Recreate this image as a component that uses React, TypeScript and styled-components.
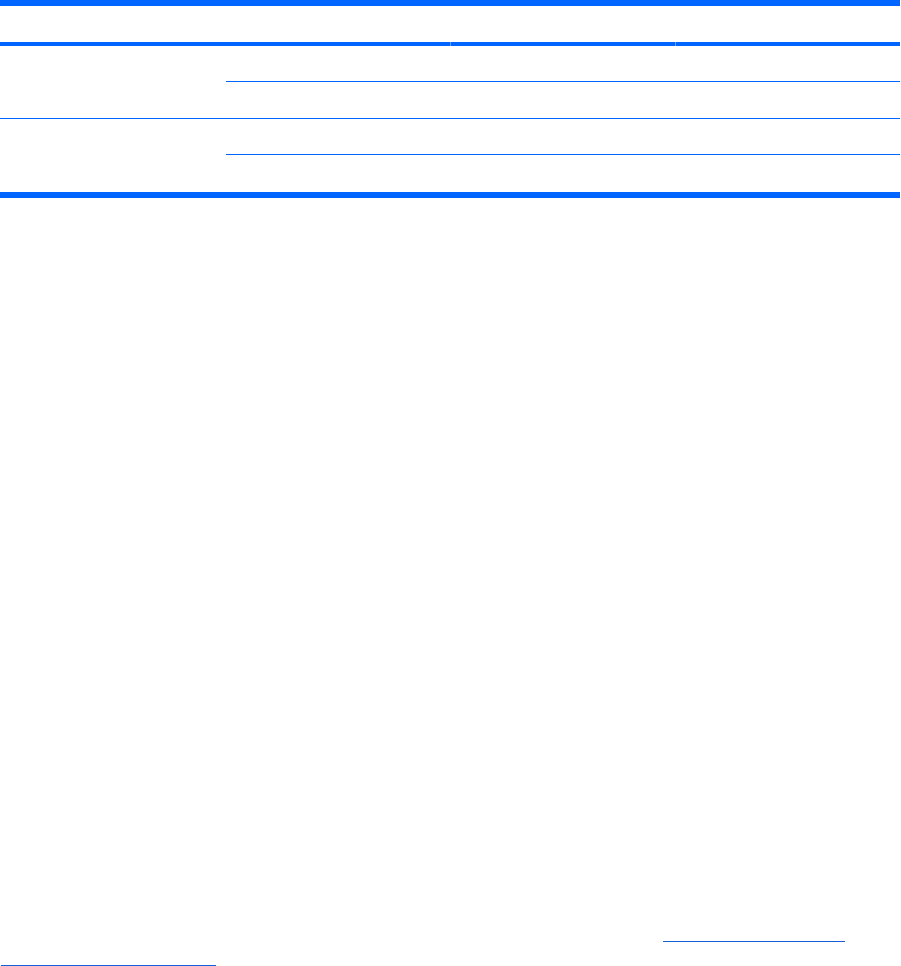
import React from "react";
import styled, { createGlobalStyle } from "styled-components";

const GlobalStyle = createGlobalStyle`
  html, body {
    margin: 0;
    padding: 0;
    background: #ffffff;
    font-family: "Liberation Sans", Arial, sans-serif;
  }
  * { box-sizing: border-box; }
`;

const BLUE = "#0066ff";
const LINK = "#165fd8";

const Page = styled.div`
  width: 901px;
  min-height: 966px;
  display: flex;
  flex-direction: column;
`;

const Table = styled.div`
  width: 900px;
  display: grid;
  grid-template-columns: 226px 224px 225px 225px;
  grid-template-rows: 40px 36px 37px 36px 37px;
  border-top: 6px solid ${BLUE};
  border-bottom: 6px solid ${BLUE};
`;

const HeadCell = styled.div<{ $divider?: boolean }>`
  border-bottom: 4px solid ${BLUE};
  position: relative;
  ${(p) =>
    p.$divider
      ? `&::before { content: ""; position: absolute; left: 0; bottom: -4px; width: 1px; height: 4px; background: #66a3ff; }`
      : ""}
`;

const GroupCell = styled.div<{ $last?: boolean }>`
  grid-row: span 2;
  border-bottom: ${(p) => (p.$last ? "none" : `1px solid ${BLUE}`)};
`;

const Cell = styled.div<{ $line?: boolean }>`
  border-bottom: ${(p) => (p.$line ? `1px solid ${BLUE}` : "none")};
`;

const Footer = styled.div`
  margin-top: 743px;
  display: flex;
  flex-direction: column;
  gap: 23px;
`;

const LinkLine = styled.span<{ $indent: number; $width: number }>`
  display: block;
  height: 1px;
  margin-left: ${(p) => p.$indent}px;
  width: ${(p) => p.$width}px;
  background: ${LINK};
`;

const groups = [{ last: false }, { last: true }];

export default function App() {
  return (
    <>
      <GlobalStyle />
      <Page>
        <Table>
          <HeadCell />
          <HeadCell />
          <HeadCell $divider />
          <HeadCell $divider />
          {groups.map((g, gi) => (
            <React.Fragment key={gi}>
              <GroupCell $last={g.last} />
              <Cell $line />
              <Cell $line />
              <Cell $line />
              <Cell $line={!g.last} />
              <Cell $line={!g.last} />
              <Cell $line={!g.last} />
            </React.Fragment>
          ))}
        </Table>
        <Footer>
          <LinkLine $indent={663} $width={182} />
          <LinkLine $indent={1} $width={215} />
        </Footer>
      </Page>
    </>
  );
}
